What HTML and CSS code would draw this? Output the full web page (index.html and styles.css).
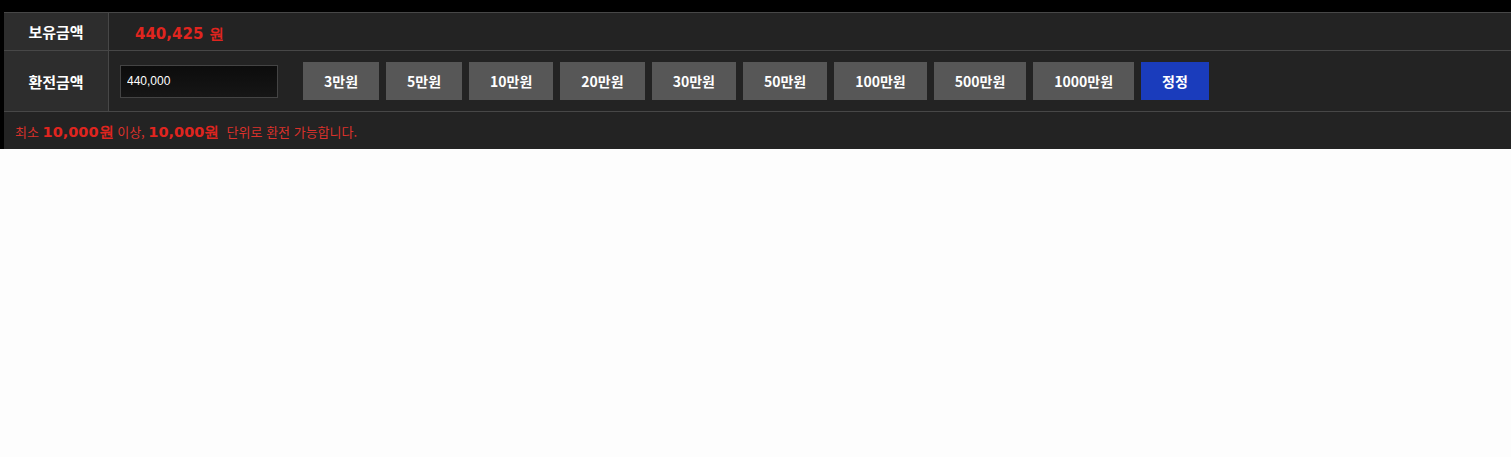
FILE: index.html
```html
<!DOCTYPE html>
<html lang="ko">
<head>
  <meta charset="UTF-8" />
  <title>환전신청</title>
  <link rel="stylesheet" href="styles.css">
</head>
<body>

  <div class="exchange-wrap">
    <table class="exchange-table">
      <!-- Balance -->
      <tr class="row-balance">
        <th>보유금액</th>
        <td><span class="balance">440,425 원</span></td>
      </tr>

      <!-- Amount input + quick buttons -->
      <tr class="row-amount">
        <th>환전금액</th>
        <td>
          <div class="amount-controls">
            <input type="text" class="amount-input" value="440,000" />
            <div class="quick-btns">
              <button class="quick-btn">3만원</button>
              <button class="quick-btn">5만원</button>
              <button class="quick-btn">10만원</button>
              <button class="quick-btn">20만원</button>
              <button class="quick-btn">30만원</button>
              <button class="quick-btn">50만원</button>
              <button class="quick-btn">100만원</button>
              <button class="quick-btn">500만원</button>
              <button class="quick-btn">1000만원</button>
              <button class="quick-btn reset-btn">정정</button>
            </div>
          </div>
        </td>
      </tr>

      <!-- Notice -->
      <tr class="row-notice">
        <td colspan="2">
          최소 <b>10,000원</b> 이상, <b>10,000원</b>&nbsp; 단위로 환전 가능합니다.
        </td>
      </tr>
    </table>
  </div>

</body>
</html>
```

FILE: styles.css
```css
body {
  margin: 0;
  padding: 0;
  background: #fdfdfd;
  font-family: "Noto Sans CJK KR", "Noto Sans", sans-serif;
}

/* Black frame around the form */
.exchange-wrap {
  background: #000;
  padding: 12px 0 0 4px;
}

.exchange-table {
  width: 100%;
  border-collapse: collapse;
  background: #232323;
}

.exchange-table th,
.exchange-table td {
  border-top: 1px solid #474747;
  padding: 0;
}

/* Label column */
.exchange-table th {
  width: 104px;
  background: #2d2d2d;
  border-right: 1px solid #474747;
  color: #fff;
  font-size: 15px;
  font-weight: 700;
  text-align: center;
}

.row-balance th,
.row-balance td {
  height: 37px;
}

.row-balance td {
  padding-left: 26px;
}

.balance {
  font-family: "DejaVu Sans", sans-serif;
  font-size: 15px;
  font-weight: 700;
  color: #e0251f;
}

.row-amount th,
.row-amount td {
  height: 60px;
}

.row-amount td {
  padding-left: 11px;
}

.amount-controls {
  display: flex;
  align-items: center;
  gap: 25px;
}

.amount-input {
  width: 158px;
  height: 33px;
  box-sizing: border-box;
  padding: 0 6px;
  border: 1px solid #444;
  background: linear-gradient(#0c0c0c, #161616);
  color: #fff;
  font-family: "Liberation Sans", sans-serif;
  font-size: 12px;
  outline: none;
}

.quick-btns {
  display: flex;
  gap: 7px;
}

.quick-btn {
  height: 38px;
  padding: 0 21px;
  border: none;
  background: #575757;
  color: #fff;
  font-family: "Noto Sans CJK KR", sans-serif;
  font-size: 14px;
  font-weight: 700;
  cursor: pointer;
}

.reset-btn {
  background: #1a3cbc;
}

/* Notice line */
.row-notice td {
  height: 35px;
  padding: 2px 0 0 11px;
  color: #d9312b;
  font-size: 13px;
}

.row-notice b {
  font-family: "DejaVu Sans", sans-serif;
  font-size: 14.5px;
  font-weight: 700;
  color: #e0251f;
}
```
